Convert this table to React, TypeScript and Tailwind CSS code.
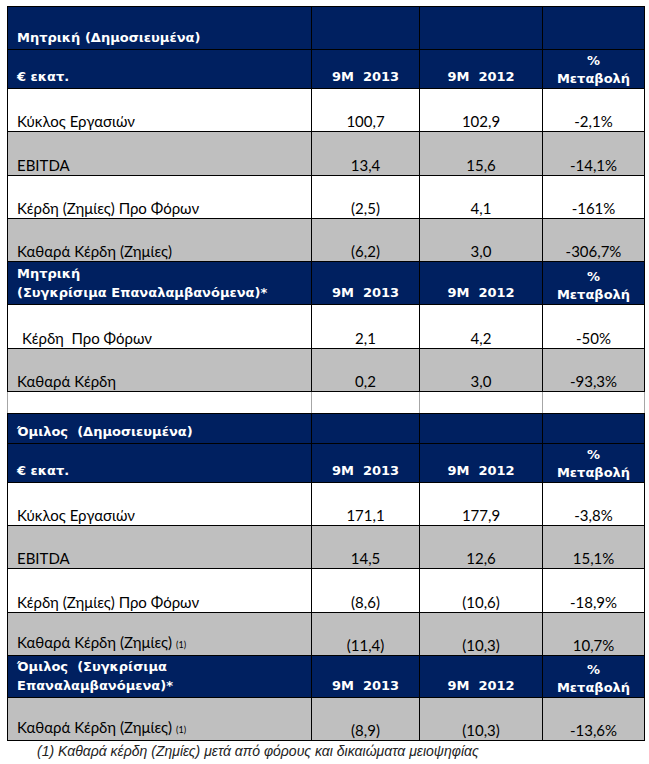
import React from "react";

type Row = {
  label: React.ReactNode;
  a: string;
  b: string;
  c: string;
  gray?: boolean;
  h: string;
};

const navy = "bg-[#002060]";
const head = "font-['DejaVu_Sans',sans-serif] font-bold text-[13px] text-white";
const body = "font-['Lato','Open_Sans',sans-serif] text-[15px] text-black";

function Note() {
  return <span className="text-[9px] ml-1 align-baseline">(1)</span>;
}

function HeaderRow({ left, h, pct = true, years = true }: { left: React.ReactNode; h: string; pct?: boolean; years?: boolean }) {
  return (
    <tr className={`${navy} ${head}`}>
      <td className={`border border-black align-bottom pl-[9px] pb-[2px] leading-[19px] ${h}`}>{left}</td>
      <td className="border border-black align-bottom text-center pb-[2px] whitespace-pre leading-[19px]">{years ? "9M  2013" : ""}</td>
      <td className="border border-black align-bottom text-center pb-[2px] whitespace-pre leading-[19px]">{years ? "9M  2012" : ""}</td>
      <td className="border border-black align-bottom text-center pb-0 leading-[18px]">
        {pct ? (
          <>
            %
            <br />
            Μεταβολή
          </>
        ) : null}
      </td>
    </tr>
  );
}

function DataRow({ r }: { r: Row }) {
  const bg = r.gray ? "bg-[#bfbfbf]" : "bg-white";
  return (
    <tr className={`${bg} ${body}`}>
      <td className={`border border-black align-bottom pl-[9px] pb-[1px] leading-[18px] ${r.h}`}>{r.label}</td>
      <td className="border border-black align-bottom text-center pb-[1px] leading-[18px]">{r.a}</td>
      <td className="border border-black align-bottom text-center pb-[1px] leading-[18px]">{r.b}</td>
      <td className="border border-black align-bottom text-center pb-[1px] leading-[18px]">{r.c}</td>
    </tr>
  );
}

const parentPublished: Row[] = [
  { label: "Κύκλος Εργασιών", a: "100,7", b: "102,9", c: "-2,1%", h: "h-[43px]" },
  { label: "EBITDA", a: "13,4", b: "15,6", c: "-14,1%", gray: true, h: "h-[44px]" },
  { label: "Κέρδη (Ζημίες) Προ Φόρων", a: "(2,5)", b: "4,1", c: "-161%", h: "h-[43px]" },
  { label: "Καθαρά Κέρδη (Ζημίες)", a: "(6,2)", b: "3,0", c: "-306,7%", gray: true, h: "h-[43px]" },
];

const parentComparable: Row[] = [
  { label: <span className="pl-[5px] whitespace-pre">Κέρδη  Προ Φόρων</span>, a: "2,1", b: "4,2", c: "-50%", h: "h-[44px]" },
  { label: "Καθαρά Κέρδη", a: "0,2", b: "3,0", c: "-93,3%", gray: true, h: "h-[43px]" },
];

const groupPublished: Row[] = [
  { label: "Κύκλος Εργασιών", a: "171,1", b: "177,9", c: "-3,8%", h: "h-[43px]" },
  { label: "EBITDA", a: "14,5", b: "12,6", c: "15,1%", gray: true, h: "h-[43px]" },
  { label: "Κέρδη (Ζημίες) Προ Φόρων", a: "(8,6)", b: "(10,6)", c: "-18,9%", h: "h-[44px]" },
  {
    label: (
      <>
        Καθαρά Κέρδη (Ζημίες)
        <Note />
      </>
    ),
    a: "(11,4)",
    b: "(10,3)",
    c: "10,7%",
    gray: true,
    h: "h-[43px]",
  },
];

const groupComparable: Row[] = [
  {
    label: (
      <>
        Καθαρά Κέρδη (Ζημίες)
        <Note />
      </>
    ),
    a: "(8,9)",
    b: "(10,3)",
    c: "-13,6%",
    gray: true,
    h: "h-[43px]",
  },
];

export default function App() {
  return (
    <div className="min-h-screen bg-white pt-[6px] pl-[7px]">
      <table className="border-collapse table-fixed w-[637px]">
        <colgroup>
          <col className="w-[304px]" />
          <col className="w-[108px]" />
          <col className="w-[123px]" />
          <col className="w-[102px]" />
        </colgroup>
        <tbody>
          <HeaderRow left="Μητρική (Δημοσιευμένα)" h="h-[43px]" pct={false} years={false} />
          <HeaderRow left="€ εκατ." h="h-[39px]" />
          {parentPublished.map((r, i) => (
            <DataRow key={"pp" + i} r={r} />
          ))}
          <HeaderRow
            left={
              <>
                Μητρική
                <br />
                (Συγκρίσιμα Επαναλαμβανόμενα)*
              </>
            }
            h="h-[43px]"
          />
          {parentComparable.map((r, i) => (
            <DataRow key={"pc" + i} r={r} />
          ))}
          <tr className="bg-white">
            <td className="h-[22px] border-l border-l-[#a6a6a6] border-r border-r-[#a6a6a6] border-y border-y-black" />
            <td className="border-x border-x-[#a6a6a6] border-y border-y-black" />
            <td className="border-x border-x-[#a6a6a6] border-y border-y-black" />
            <td className="border-x border-x-[#a6a6a6] border-y border-y-black" />
          </tr>
          <HeaderRow left={<span className="whitespace-pre">Όμιλος  (Δημοσιευμένα)</span>} h="h-[30px]" pct={false} years={false} />
          <HeaderRow left="€ εκατ." h="h-[39px]" />
          {groupPublished.map((r, i) => (
            <DataRow key={"gp" + i} r={r} />
          ))}
          <HeaderRow
            left={
              <>
                <span className="whitespace-pre">Όμιλος  (Συγκρίσιμα</span>
                <br />
                Επαναλαμβανόμενα)*
              </>
            }
            h="h-[42px]"
          />
          {groupComparable.map((r, i) => (
            <DataRow key={"gc" + i} r={r} />
          ))}
        </tbody>
      </table>
      <p className="pl-[30px] pt-[2px] font-['Liberation_Sans',sans-serif] italic text-[14px] leading-[16px] text-[#222]">
        (1) Καθαρά κέρδη (Ζημίες) μετά από φόρους και δικαιώματα μειοψηφίας
      </p>
    </div>
  );
}
